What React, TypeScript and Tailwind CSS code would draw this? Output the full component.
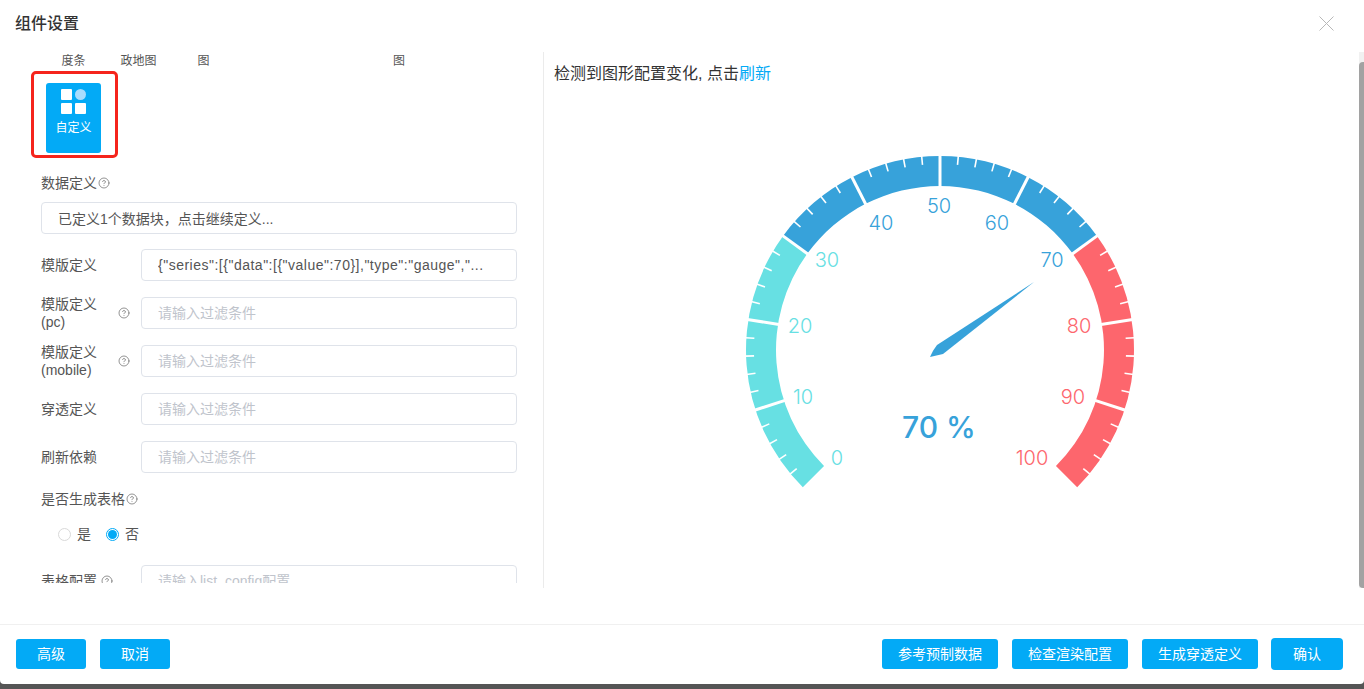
import React from "react";
import { CircleHelp } from "lucide-react";

const font = "font-['Liberation_Sans','Noto_Sans_CJK_SC',sans-serif]";

const CX = 250;
const CY = 250;
const R = 194;
const r0 = 164;

function pt(value: number, radius: number) {
  const a = ((225 - value * 2.7) * Math.PI) / 180;
  return [CX + radius * Math.cos(a), CY - radius * Math.sin(a)];
}

function arc(from: number, to: number) {
  const [x1, y1] = pt(from, R);
  const [x2, y2] = pt(to, R);
  const [x3, y3] = pt(to, r0);
  const [x4, y4] = pt(from, r0);
  const large = (to - from) * 2.7 > 180 ? 1 : 0;
  return `M${x1} ${y1}A${R} ${R} 0 ${large} 1 ${x2} ${y2}L${x3} ${y3}A${r0} ${r0} 0 ${large} 0 ${x4} ${y4}Z`;
}

const TEAL = "#67e0e3";
const BLUE = "#37a2da";
const RED = "#fd666d";

const labels = [
  { v: 0, x: 147, y: 358, c: TEAL },
  { v: 10, x: 113, y: 297, c: TEAL },
  { v: 20, x: 110, y: 226, c: TEAL },
  { v: 30, x: 137, y: 160, c: TEAL },
  { v: 40, x: 191, y: 123, c: BLUE },
  { v: 50, x: 249, y: 106, c: BLUE },
  { v: 60, x: 307, y: 123, c: BLUE },
  { v: 70, x: 362, y: 160, c: BLUE },
  { v: 80, x: 389, y: 226, c: RED },
  { v: 90, x: 383, y: 297, c: RED },
  { v: 100, x: 342, y: 358, c: RED },
];

function Gauge() {
  const ticks: number[] = [];
  for (let i = 0; i <= 100; i += 2) if (i % 10 !== 0) ticks.push(i);
  const splits = [10, 20, 30, 40, 50, 60, 70, 80, 90];
  return (
    <svg width="500" height="400" viewBox="0 0 500 400" className="block">
      <path d={arc(0, 30)} fill={TEAL} />
      <path d={arc(30, 70)} fill={BLUE} />
      <path d={arc(70, 100)} fill={RED} />
      {ticks.map((t) => {
        const [x1, y1] = pt(t, R + 1);
        const [x2, y2] = pt(t, R - 8);
        return <line key={t} x1={x1} y1={y1} x2={x2} y2={y2} stroke="#fff" strokeWidth="1.6" />;
      })}
      {splits.map((t) => {
        const [x1, y1] = pt(t, R + 1);
        const [x2, y2] = pt(t, r0 - 1);
        return <line key={t} x1={x1} y1={y1} x2={x2} y2={y2} stroke="#fff" strokeWidth="3" />;
      })}
      {labels.map((l) => (
        <text key={l.v} x={l.x} y={l.y} dy="0.35em" textAnchor="middle" fill={l.c} fontSize="20" fontWeight="300" fontFamily="Inter, 'Liberation Sans', sans-serif">
          {l.v}
        </text>
      ))}
      <path d="M344 182L247 245Q243 250 240 257L253 254Z" fill={BLUE} />
      <text x="249" y="327" dy="0.35em" textAnchor="middle" fill={BLUE} fontSize="30" fontWeight="500" fontFamily="Inter, 'Liberation Sans', sans-serif">
        70 %
      </text>
    </svg>
  );
}

function Help() {
  return <CircleHelp size={12} strokeWidth={1.4} className="text-[#666] shrink-0" />;
}

function Row({ label, sub, help, value, placeholder }: { label: string; sub?: string; help?: boolean; value?: string; placeholder?: string }) {
  return (
    <div className="flex items-center h-8 mb-4">
      <div className="w-[100px] flex items-center shrink-0 text-sm text-[#555]">
        <div className="w-[77px] leading-[18px]">
          <div>{label}</div>
          {sub && <div>{sub}</div>}
        </div>
        {help && <Help />}
      </div>
      <input
        readOnly
        value={value}
        placeholder={placeholder}
        className={`w-[376px] h-8 px-4 text-sm text-[#555] placeholder:text-[#c0c4cc] bg-white border border-[#dfe3ea] rounded outline-none ${value ? "tracking-[0.5px]" : ""}`}
      />
    </div>
  );
}

function Btn({ children, w }: { children: React.ReactNode; w: string }) {
  return (
    <button className={`${w} h-[30px] bg-[#03aaf6] text-white text-sm rounded-[3px]`}>{children}</button>
  );
}

export default function App() {
  return (
    <div className={`h-[689px] w-[1364px] overflow-hidden bg-[#555] ${font}`}>
      <div className="h-[684px] bg-white rounded-b flex flex-col">
        <div className="h-[52px] shrink-0 flex items-center justify-between pl-[15px] pr-[30px] pb-[5px]">
          <span className="text-base font-medium text-[#333]">组件设置</span>
          <svg width="15" height="15" viewBox="0 0 15 15" stroke="#b8b8b8" strokeWidth="1">
            <path d="M0.5 0.5L14.5 14.5M14.5 0.5L0.5 14.5" />
          </svg>
        </div>

        <div className="flex h-[536px] shrink-0">
          <div className="w-[544px] shrink-0 border-r border-[#ebebeb] h-full">
            <div className="h-[531px] overflow-hidden pl-[41px] pr-[26px]">
              <div className="flex h-[18px] items-center text-xs text-[#555]">
                <div className="w-[65px] text-center">度条</div>
                <div className="w-[65px] text-center">政地图</div>
                <div className="w-[65px] text-center">图</div>
                <div className="w-[195px] text-right pr-[26px]">图</div>
              </div>
              <div className="relative w-[55px] h-[70px] ml-[5px] mt-[13px] bg-[#03aaf6] rounded-[3px] flex flex-col items-center pt-[6px]">
                <div className="grid grid-cols-2 gap-[3px]">
                  <div className="w-[11px] h-[11px] bg-white rounded-[1px]" />
                  <div className="w-[11px] h-[11px] bg-[#a9dcfd] rounded-full" />
                  <div className="w-[11px] h-[11px] bg-white rounded-[1px]" />
                  <div className="w-[11px] h-[11px] bg-white rounded-[1px]" />
                </div>
                <div className="text-xs text-white mt-[6px]">自定义</div>
                <div className="absolute -left-[15px] -top-[12px] w-[87px] h-[87px] border-[3px] border-[#f5241c] rounded-[5px]" />
              </div>

              <div className="mt-[20px] flex items-center gap-[1px] text-sm text-[#555] h-5">
                数据定义
                <Help />
              </div>
              <input
                readOnly
                value="已定义1个数据块，点击继续定义..."
                className="mt-[9px] mb-[15px] w-[476px] h-8 px-4 text-sm text-[#555] bg-white border border-[#dfe3ea] rounded outline-none"
              />

              <Row label="模版定义" value={'{"series":[{"data":[{"value":70}],"type":"gauge","...'} />
              <Row label="模版定义" sub="(pc)" help placeholder="请输入过滤条件" />
              <Row label="模版定义" sub="(mobile)" help placeholder="请输入过滤条件" />
              <Row label="穿透定义" placeholder="请输入过滤条件" />
              <Row label="刷新依赖" placeholder="请输入过滤条件" />

              <div className="flex items-center gap-[1px] text-sm text-[#555] h-5 mt-[1px]">
                是否生成表格
                <Help />
              </div>
              <div className="flex items-center h-5 mt-[15px] ml-[17px] text-sm text-[#555]">
                <span className="w-[13px] h-[13px] rounded-full border border-[#d9d9d9] bg-white" />
                <span className="ml-[6px] mr-[15px]">是</span>
                <span className="w-[13px] h-[13px] rounded-full border border-[#03aaf6] bg-white flex items-center justify-center">
                  <span className="w-[9px] h-[9px] rounded-full bg-[#03aaf6]" />
                </span>
                <span className="ml-[6px]">否</span>
              </div>

              <div className="flex items-center h-8 mt-[21px]">
                <div className="w-[100px] flex items-center shrink-0 text-sm text-[#555]">
                  <span className="w-[60px]">表格配置</span>
                  <Help />
                </div>
                <input
                  readOnly
                  placeholder="请输入list_config配置"
                  className="w-[376px] h-8 px-4 text-sm placeholder:text-[#c0c4cc] bg-white border border-[#dfe3ea] rounded outline-none"
                />
              </div>
            </div>
          </div>

          <div className="flex-1 pl-[10px] pt-[11px] min-w-0">
            <div className="text-base leading-[22px] text-[#333]">
              检测到图形配置变化, 点击<span className="text-[#03aaf6]">刷新</span>
            </div>
            <div className="ml-[136px] mt-[15px]">
              <Gauge />
            </div>
          </div>

          <div className="w-[5px] shrink-0 bg-[#f1f1f1] pt-[10px]">
            <div className="h-[526px] bg-[#a2a2a2] rounded-l" />
          </div>
        </div>

        <div className="flex-1 mt-[36px] border-t border-[#f0f0f0] flex items-center justify-between pl-4 pr-[21px] pb-[2px]">
          <div className="flex gap-[14px]">
            <Btn w="w-[70px]">高级</Btn>
            <Btn w="w-[70px]">取消</Btn>
          </div>
          <div className="flex items-center gap-[14px]">
            <Btn w="w-[116px]">参考预制数据</Btn>
            <Btn w="w-[116px]">检查渲染配置</Btn>
            <Btn w="w-[116px]">生成穿透定义</Btn>
            <button className="w-[72px] h-8 -ml-px bg-[#03aaf6] text-white text-sm rounded">确认</button>
          </div>
        </div>
      </div>
    </div>
  );
}
